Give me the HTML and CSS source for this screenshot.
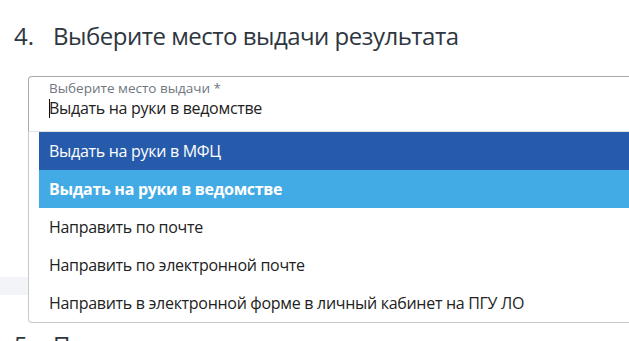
FILE: index.html
```html
<!DOCTYPE html>
<html lang="ru">
<head>
<meta charset="utf-8">
<title>Выберите место выдачи результата</title>
<link rel="stylesheet" href="styles.css">
</head>
<body>
<div class="page">
  <h2 class="step-title"><span class="step-num">4.</span>Выберите место выдачи результата</h2>
  <div class="select">
    <div class="field">
      <div class="field-label">Выберите место выдачи *</div>
      <div class="field-value"><span class="caret"></span>Выдать на руки в ведомстве</div>
    </div>
    <ul class="menu">
      <li class="option option-hover">Выдать на руки в МФЦ</li>
      <li class="option option-selected">Выдать на руки в ведомстве</li>
      <li class="option">Направить по почте</li>
      <li class="option">Направить по электронной почте</li>
      <li class="option">Направить в электронной форме в личный кабинет на ПГУ ЛО</li>
    </ul>
    <div class="under">
      <div class="band"></div>
    </div>
  </div>
  <h2 class="step-title step-next"><span class="step-num">5.</span>Получение результата</h2>
</div>
</body>
</html>
```
FILE: styles.css
```css
html, body {
  margin: 0;
  padding: 0;
  background: #ffffff;
  overflow: hidden;
}
body {
  font-family: "Open Sans", "Noto Sans", sans-serif;
  color: #222;
}
.page {
  width: 629px;
}
.step-title {
  margin: 0;
  padding: 20px 0 0 14px;
  font-size: 24px;
  line-height: 32px;
  letter-spacing: -0.5px;
  font-weight: 400;
  color: #2e3640;
  white-space: nowrap;
}
.step-num {
  margin-right: 19px;
  letter-spacing: 0;
}
.select {
  position: relative;
  margin-top: 24px;
}
.field {
  margin-left: 28px;
  width: 640px;
  border: 1px solid #a9a9a9;
  border-bottom: none;
  border-radius: 4px 4px 0 0;
  padding: 3px 20px 12px 20px;
  box-sizing: content-box;
}
.field-label {
  font-size: 13.5px;
  line-height: 16px;
  color: #6f7780;
}
.field-value {
  margin-top: 1px;
  font-size: 16px;
  line-height: 22px;
  letter-spacing: -0.3px;
  color: #222;
  white-space: nowrap;
}
.caret {
  display: inline-block;
  width: 1px;
  height: 19px;
  background: #111;
  vertical-align: -4px;
  margin-right: -1px;
}
.menu {
  position: absolute;
  z-index: 2;
  top: 55px;
  left: 28px;
  width: 660px;
  margin: 0;
  padding: 0 0 0 10px;
  list-style: none;
  background: #fff;
  border: 1px solid #c9c9c9;
  border-top-color: #e3e3e3;
  border-radius: 0 0 4px 4px;
}
.option {
  height: 38px;
  line-height: 38px;
  padding-left: 10px;
  font-size: 16px;
  letter-spacing: -0.3px;
  color: #222;
  white-space: nowrap;
}
.option-hover {
  background: #265bab;
  color: #fff;
}
.option-selected {
  background: #42abe5;
  color: #fff;
  font-weight: 700;
}
.under {
  padding-top: 146px;
}
.band {
  height: 18px;
  background: #f2f4f8;
}
.step-next {
  padding-top: 34px;
}
```
